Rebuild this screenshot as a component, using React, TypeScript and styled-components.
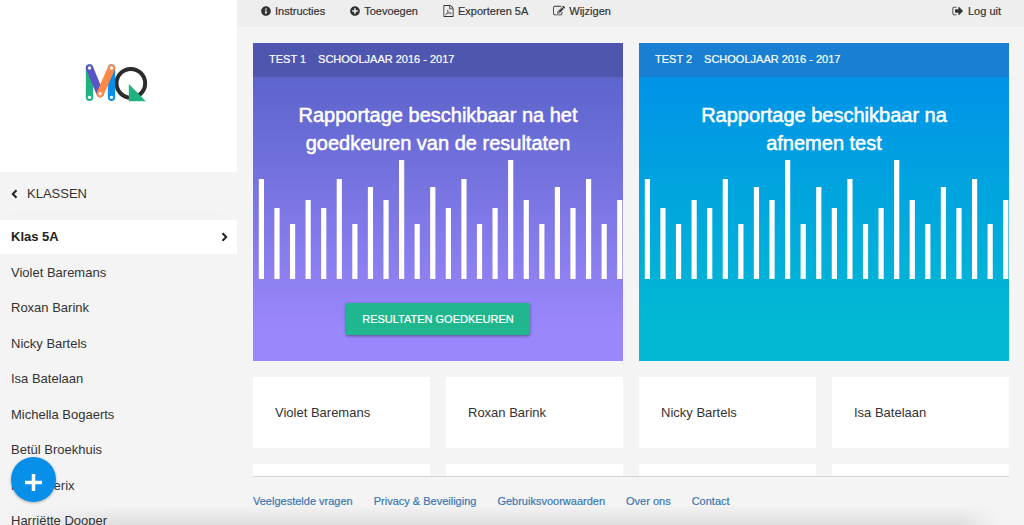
import React from "react";
import styled, { createGlobalStyle } from "styled-components";
import { FaInfoCircle, FaPlusCircle } from "react-icons/fa";

const GlobalStyle = createGlobalStyle`
  *, *::before, *::after { box-sizing: border-box; }
  body {
    margin: 0;
    background: #f4f4f4;
    color: #333;
    font: 13px/20px "Liberation Sans", Arial, sans-serif;
  }
  a { color: inherit; text-decoration: none; }
  svg { display: block; flex: none; }
`;

const Page = styled.div`
  display: grid;
  grid-template-columns: 237px minmax(0, 1fr);
  height: 100vh;
  overflow: hidden;
`;

const Sidebar = styled.aside`
  min-height: 0;
  overflow: hidden;
`;

const LogoPanel = styled.a`
  display: flex;
  justify-content: center;
  height: 172px;
  padding: 64px 5px 0 0;
  background: #fff;
`;

const BackLink = styled.a`
  display: flex;
  align-items: center;
  gap: 9px;
  height: 43px;
  margin: 0 16px 5px 11px;
  padding-top: 1px;
  border-bottom: 1px solid #efefef;
`;

const ClassLink = styled.a`
  display: flex;
  align-items: center;
  justify-content: space-between;
  height: 34px;
  padding: 0 9px 0 11px;
  background: #fff;
  color: #222;
  font-weight: bold;
`;

const StudentList = styled.ul`
  display: grid;
  grid-auto-rows: 35px 36px;
  align-items: center;
  margin: 0;
  padding: 1px 11px 0;
  list-style: none;
`;

const Main = styled.main`
  display: grid;
  grid-template-rows: auto minmax(0, 1fr) auto;
  min-height: 0;
`;

const Toolbar = styled.nav`
  display: flex;
  align-items: center;
  gap: 25px;
  height: 27px;
  padding: 0 23px 5px 24px;
  background: #eee;
  font-size: 11px;
  line-height: 16px;
  -webkit-text-stroke: 0.2px currentColor;
`;

const ToolLink = styled.a<{ $end?: boolean }>`
  display: flex;
  align-items: center;
  gap: 4px;
  margin-left: ${(p) => (p.$end ? "auto" : "0")};
`;

const Content = styled.div`
  padding: 16px 15px 0 16px;
  overflow: hidden;
`;

const TestGrid = styled.div`
  display: grid;
  grid-template-columns: repeat(2, minmax(0, 1fr));
  gap: 16px;
`;

const TestCard = styled.section<{ $from: string; $to: string }>`
  display: flex;
  flex-direction: column;
  align-items: center;
  height: 318px;
  background: linear-gradient(${(p) => p.$from} 10%, ${(p) => p.$to} 90%);
  color: #fff;
`;

const TestHeader = styled.header<{ $color: string }>`
  display: flex;
  align-items: center;
  align-self: stretch;
  gap: 12px;
  height: 34px;
  padding: 0 16px 2px;
  background: ${(p) => p.$color};
  font-size: 11px;
  line-height: 16px;
  -webkit-text-stroke: 0.2px currentColor;
`;

const TestTitle = styled.h2`
  max-width: 300px;
  margin: 24px 0 3px;
  font-size: 20px;
  line-height: 28px;
  font-weight: normal;
  text-align: center;
  -webkit-text-stroke: 0.5px currentColor;
`;

const Chart = styled.svg`
  width: 100%;
  height: 119px;
`;

const ApproveButton = styled.button`
  height: 32px;
  margin-top: 24px;
  padding: 0 16px;
  border: 0;
  border-radius: 2px;
  background: #20b78e;
  box-shadow: 0 1px 3px rgba(0, 0, 0, 0.45);
  color: #fff;
  font: 11px/16px "Liberation Sans", Arial, sans-serif;
  -webkit-text-stroke: 0.2px currentColor;
`;

const StudentGrid = styled.div`
  display: grid;
  grid-template-columns: repeat(4, minmax(0, 1fr));
  grid-auto-rows: 71px;
  gap: 16px;
  margin-top: 16px;
`;

const StudentCard = styled.a`
  display: flex;
  align-items: center;
  padding: 0 22px;
  background: #fff;
`;

const Footer = styled.footer`
  display: flex;
  gap: 21px;
  height: 49px;
  margin: 0 15px 0 16px;
  padding-top: 16px;
  border-top: 1px solid #d4d4d4;
  color: #3a76b1;
  font-size: 11px;
  line-height: 16px;
  -webkit-text-stroke: 0.2px currentColor;
`;

const AddButton = styled.button`
  position: fixed;
  left: 11px;
  bottom: 23px;
  display: grid;
  place-items: center;
  width: 45px;
  height: 45px;
  padding: 5px 0 0;
  border: 0;
  border-radius: 50%;
  background: #078fe9;
  box-shadow: 0 1px 3px rgba(0, 0, 0, 0.3);
  color: #fff;
`;

const BottomShade = styled.div`
  position: fixed;
  inset: auto 24px 0 0;
  height: 20px;
  background: linear-gradient(transparent, rgba(0, 0, 0, 0.09));
  mask-image: linear-gradient(to right, transparent, #000 120px, #000 calc(100% - 40px), transparent);
  pointer-events: none;
`;

const icons = {
  edit: "M888 1184l116-116-152-152-116 116v56h96v96h56zm440-720q-16-16-33 1l-350 350q-17 17-1 33t33-1l350-350q17-17 1-33zm80 594v190q0 119-84.5 203.5t-203.5 84.5h-832q-119 0-203.5-84.5t-84.5-203.5v-832q0-119 84.5-203.5t203.5-84.5h832q63 0 117 25 15 7 18 23 3 17-9 29l-49 49q-14 14-32 8-23-6-45-6h-832q-66 0-113 47t-47 113v832q0 66 47 113t113 47h832q66 0 113-47t47-113v-126q0-13 9-22l64-64q15-15 35-7t20 29zm-96-738l288 288-672 672h-288v-288zm444 132l-92 92-288-288 92-92q28-28 68-28t68 28l152 152q28 28 28 68t-28 68z",
  signOut:
    "M704 1440q0 4 1 20t.5 26.5-3 23.5-10 19.5-20.5 6.5h-320q-119 0-203.5-84.5t-84.5-203.5v-704q0-119 84.5-203.5t203.5-84.5h320q13 0 22.5 9.5t9.5 22.5q0 4 1 20t.5 26.5-3 23.5-10 19.5-20.5 6.5h-320q-66 0-113 47t-47 113v704q0 66 47 113t113 47h312l11.5 1 11.5 3 8 5.5 7 9 2 13.5zm928-544q0 26-19 45l-544 544q-19 19-45 19t-45-19-19-45v-288h-448q-26 0-45-19t-19-45v-384q0-26 19-45t45-19h448v-288q0-26 19-45t45-19 45 19l544 544q19 19 19 45z",
  file: "M1596 380q28 28 48 76t20 88v1152q0 40-28 68t-68 28h-1344q-40 0-68-28t-28-68v-1600q0-40 28-68t68-28h896q40 0 88 20t76 48zm-444-244v376h376q-10-29-22-41l-313-313q-12-12-41-22zm384 1528v-1024h-416q-40 0-68-28t-28-68v-416h-768v1536h1280z",
};

function SolidIcon({ path }: { path: string }) {
  return (
    <svg width="12" height="12" viewBox="0 0 1792 1792" fill="currentColor" aria-hidden="true">
      <path d={path} />
    </svg>
  );
}

function PdfIcon() {
  return (
    <svg width="11" height="12" viewBox="64 0 1664 1792" fill="currentColor" aria-hidden="true">
      <path d={icons.file} />
      <path
        d="M450 1470C610 1390 850 990 810 770C790 690 730 740 760 850C830 1080 1000 1260 1330 1270C1400 1230 1280 1150 1000 1190C780 1220 560 1310 450 1470Z"
        fill="none"
        stroke="currentColor"
        strokeWidth="90"
      />
    </svg>
  );
}

function Chevron({ direction }: { direction: "left" | "right" }) {
  return (
    <svg width="7" height="10" viewBox="0 0 7 10" fill="none" stroke="#222" strokeWidth="2" aria-hidden="true">
      <path d={direction === "left" ? "M5.5 1.2 1.8 5l3.7 3.8" : "M1.5 1.2 5.2 5 1.5 8.8"} />
    </svg>
  );
}

function Logo() {
  const pins = [
    [58, 55],
    [58, 143],
    [90, 132],
    [124, 55],
    [124, 143],
  ];
  return (
    <svg width="63" height="38" viewBox="46 43 186 114" role="img" aria-label="MQ">
      <circle cx="182" cy="101" r="43" fill="none" stroke="#2b2b2b" strokeWidth="12" />
      <path d="M176 103v52h51z" fill="#20b27f" />
      <g strokeWidth="22" strokeLinecap="round">
        <path d="M58 55v88" stroke="#20b27f" />
        <path d="M124 55v88" stroke="#078fe9" />
        <path d="M58 55l32 77" stroke="#5a55c4" />
        <path d="M124 55l-34 77" stroke="#ff8848" />
      </g>
      {pins.map(([x, y]) => (
        <circle key={`${x}-${y}`} cx={x} cy={y} r="5" fill="#fff" />
      ))}
    </svg>
  );
}

const bars = [
  100, 71, 55, 79, 71, 100, 55, 92, 79, 119, 55, 92, 71, 100, 55, 71, 119, 79, 55, 92, 71, 100, 55, 79,
];

function BarChart() {
  return (
    <Chart viewBox="0 0 370 119" preserveAspectRatio="none" fill="#fff" aria-hidden="true">
      {bars.map((height, i) => (
        <rect key={i} x={5.8 + i * 15.58} y={119 - height} width="5.2" height={height} />
      ))}
    </Chart>
  );
}

const students = [
  "Violet Baremans",
  "Roxan Barink",
  "Nicky Bartels",
  "Isa Batelaan",
  "Michella Bogaerts",
  "Betül Broekhuis",
  "Fleur Derix",
  "Harriëtte Dooper",
];

const footerLinks = [
  "Veelgestelde vragen",
  "Privacy & Beveiliging",
  "Gebruiksvoorwaarden",
  "Over ons",
  "Contact",
];

export default function App() {
  return (
    <>
      <GlobalStyle />
      <Page>
        <Sidebar>
          <LogoPanel href="#">
            <Logo />
          </LogoPanel>
          <BackLink href="#klassen">
            <Chevron direction="left" />
            KLASSEN
          </BackLink>
          <ClassLink href="#5a">
            Klas 5A
            <Chevron direction="right" />
          </ClassLink>
          <StudentList>
            {students.map((name) => (
              <li key={name}>
                <a href="#leerling">{name}</a>
              </li>
            ))}
          </StudentList>
        </Sidebar>
        <Main>
          <Toolbar>
            <ToolLink href="#instructies">
              <FaInfoCircle size={10} />
              Instructies
            </ToolLink>
            <ToolLink href="#toevoegen">
              <FaPlusCircle size={10} />
              Toevoegen
            </ToolLink>
            <ToolLink href="#exporteren">
              <PdfIcon />
              Exporteren 5A
            </ToolLink>
            <ToolLink href="#wijzigen">
              <SolidIcon path={icons.edit} />
              Wijzigen
            </ToolLink>
            <ToolLink href="#loguit" $end>
              <SolidIcon path={icons.signOut} />
              Log uit
            </ToolLink>
          </Toolbar>
          <Content>
            <TestGrid>
              <TestCard $from="#5c64cb" $to="#9a87fb">
                <TestHeader $color="#4f56b0">
                  <span>TEST 1</span>
                  <span>SCHOOLJAAR 2016 - 2017</span>
                </TestHeader>
                <TestTitle>Rapportage beschikbaar na het goedkeuren van de resultaten</TestTitle>
                <BarChart />
                <ApproveButton type="button">RESULTATEN GOEDKEUREN</ApproveButton>
              </TestCard>
              <TestCard $from="#0093e8" $to="#02b9d3">
                <TestHeader $color="#187fd2">
                  <span>TEST 2</span>
                  <span>SCHOOLJAAR 2016 - 2017</span>
                </TestHeader>
                <TestTitle>
                  Rapportage beschikbaar na
                  <br />
                  afnemen test
                </TestTitle>
                <BarChart />
              </TestCard>
            </TestGrid>
            <StudentGrid>
              {students.map((name, i) => (
                <StudentCard key={name} href="#leerling" aria-label={name}>
                  {i < 4 && name}
                </StudentCard>
              ))}
            </StudentGrid>
          </Content>
          <Footer>
            {footerLinks.map((label) => (
              <a key={label} href="#info">
                {label}
              </a>
            ))}
          </Footer>
        </Main>
      </Page>
      <BottomShade />
      <AddButton type="button" aria-label="Toevoegen">
        <svg width="17" height="17" viewBox="0 0 17 17" stroke="currentColor" strokeWidth="3.5" aria-hidden="true">
          <path d="M8.5 0v17M0 8.5h17" />
        </svg>
      </AddButton>
    </>
  );
}
